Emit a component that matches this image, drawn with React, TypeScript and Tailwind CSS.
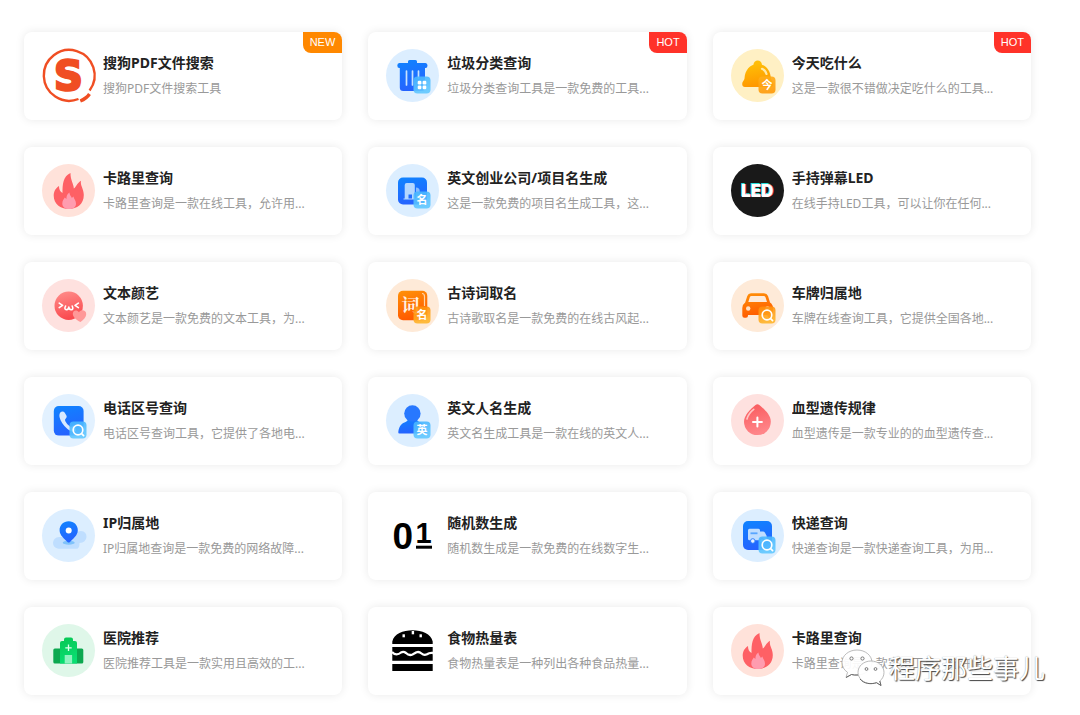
import type { ReactNode } from "react";

const CJK = "font-['Noto_Sans_CJK_SC',sans-serif]";

function Svg({ bg, children }: { bg?: string; children: ReactNode }) {
  return (
    <svg viewBox="0 0 53 53" className="size-[53px] shrink-0 overflow-visible" aria-hidden="true">
      {bg && <circle cx="26.5" cy="26.5" r="26.5" fill={bg} />}
      {children}
    </svg>
  );
}

function Defs() {
  const pairs: [string, string, string][] = [
    ["blue", "#0f84ff", "#2563ff"],
    ["sky", "#45b4ff", "#62c8ff"],
    ["amber", "#ffc107", "#ff9800"],
    ["orange", "#ff9108", "#ff5a00"],
    ["gold", "#ff8a08", "#ffb52b"],
    ["honey", "#ffb01c", "#ff9a08"],
    ["red", "#ff8f8c", "#fa4b50"],
    ["drop", "#f9585b", "#ff8589"],
    ["green", "#08c653", "#08df72"],
  ];
  return (
    <svg className="absolute size-0" aria-hidden="true">
      <defs>
        {pairs.map(([id, from, to]) => (
          <linearGradient key={id} id={id} x1="0" y1="0" x2="0.25" y2="1">
            <stop offset="0" stopColor={from} />
            <stop offset="1" stopColor={to} />
          </linearGradient>
        ))}
      </defs>
    </svg>
  );
}

function Corner({ fill, children }: { fill: string; children?: ReactNode }) {
  return (
    <g>
      <rect x="27.5" y="27.5" width="17" height="17" rx="4" fill={fill} fillOpacity="0.9" />
      {typeof children === "string" ? (
        <text x="36" y="40" textAnchor="middle" fontSize="11" fontWeight="700" fill="#fff" className={CJK}>
          {children}
        </text>
      ) : (
        children
      )}
    </g>
  );
}

const Lens = () => (
  <g fill="none" stroke="#fff" strokeWidth="1.7" strokeLinecap="round">
    <circle cx="36" cy="36" r="4.8" />
    <path d="M39.6 39.6 L41.6 41.6" />
  </g>
);

const SogouIcon = () => (
  <Svg>
    <path d="M47.6 41.5 A25.4 25.4 0 1 0 36.5 50" fill="none" stroke="#f04e23" strokeWidth="2.4" />
    <path d="M38.3 52 Q44.5 49.5 47.5 45" fill="none" stroke="#f04e23" strokeWidth="3.4" />
    <text
      x="26.5" y="41" textAnchor="middle" fontSize="40" fontWeight="700" fill="#f04e23" stroke="#f04e23" strokeWidth="2.4"
      className="font-['DejaVu_Sans',sans-serif]"
    >
      S
    </text>
  </Svg>
);

const TrashIcon = () => (
  <Svg bg="#dceeff">
    <path
      d="M22 14 V12.5 Q22 11 23.5 11 H29.5 Q31 11 31 12.5 V14 H39.5 Q41.5 14 41.5 16.5 T39.5 19 H39 V38.5 Q39 42 35.5 42 H17.2 Q13.8 42 13.8 38.5 V19 H13.3 Q11.3 19 11.3 16.5 T13.3 14 Z"
      fill="url(#blue)"
    />
    <path d="M20.5 22 V36 M26.5 22 V36 M32.5 22 V29" stroke="#c7e2ff" strokeWidth="1.7" strokeLinecap="round" />
    <Corner fill="url(#sky)">
      <g fill="#fff">
        <rect x="31.7" y="31.7" width="3.7" height="3.7" rx="1.2" />
        <rect x="36.6" y="31.7" width="3.7" height="3.7" rx="1.2" />
        <rect x="31.7" y="36.6" width="3.7" height="3.7" rx="1.2" />
        <rect x="36.6" y="36.6" width="3.7" height="3.7" rx="1.2" />
      </g>
    </Corner>
  </Svg>
);

const BellIcon = () => (
  <Svg bg="#fff0c4">
    <circle cx="26.7" cy="15.8" r="4.2" fill="#ffbd08" />
    <path d="M26.7 15 C18.5 15 14 21.5 13.5 29.5 C13.4 31.5 11.2 32.3 11.2 35 Q11.2 38 14 38 H39.5 Q42.3 38 42.3 35 C42.3 32.3 40.1 31.5 40 29.5 C39.5 21.5 35 15 26.7 15 Z" fill="url(#amber)" />
    <path d="M31 19.8 Q34.5 21.3 35.5 25" stroke="#ffe9a8" strokeWidth="2.2" strokeLinecap="round" fill="none" />
    <Corner fill="url(#honey)">今</Corner>
  </Svg>
);

const FlameIcon = () => (
  <Svg bg="#ffe2da">
    <path
      d="M28.5 9 C28.3 16 31.8 20 31.8 24.5 C34 23.5 34.7 19.5 39 16.8 C38 22 41.8 24.5 41.8 31 C41.8 40 35 45 26.7 45 C18.5 45 11.7 40 11.7 31.5 C11.7 27 14 24 17 22 C17 25.5 18 27.5 20.5 29 C20.5 20 21 12.5 28.5 9 Z"
      fill="#fe6065"
    />
    <path d="M27.5 28.5 C27.5 31.5 29.5 32 29.8 34 L31.5 32.6 C31.8 35 34 36.5 34 39.7 C34 43 31 45 27 45 C23 45 20.3 43 20.3 39.5 C20.3 36.5 21.8 35 22.8 33.5 L24.4 35 C24.4 32 25 30 27.5 28.5 Z" fill="#ff9caf" />
  </Svg>
);

const CompanyIcon = () => (
  <Svg bg="#dceeff">
    <rect x="12" y="13.5" width="29" height="27" rx="5" fill="url(#blue)" />
    <path d="M18.7 35 V21 Q18.7 19 20.7 19 H26.8 Q28.8 19 28.8 21 V35 H26 V30.5 H22.5 V35 Z" fill="#b5d7ff" />
    <path d="M30 35 V23.5 Q33.7 23.5 33.7 27 V35 Z" fill="#86bbff" />
    <path d="M17.5 35 H35" stroke="#b5d7ff" />
    <Corner fill="url(#sky)">名</Corner>
  </Svg>
);

const LedIcon = () => (
  <Svg bg="#191919">
    <g fontSize="17" fontWeight="900" textAnchor="middle" className="font-['Inter',sans-serif]">
      <text x="25.6" y="32.2" fill="#29e0dc">LED</text>
      <text x="26.9" y="33" fill="#f0407c">LED</text>
      <text x="26.2" y="32.6" fill="#fff">LED</text>
    </g>
  </Svg>
);

const FaceIcon = () => (
  <Svg bg="#fee1df">
    <circle cx="26.7" cy="26.7" r="14.2" fill="url(#red)" />
    <g fill="none" stroke="#fff" strokeWidth="1.6" strokeLinecap="round" strokeLinejoin="round">
      <path d="M17.2 24.2 L20.6 26.4 L17.2 28.6 M36.4 24.2 L33 26.4 L36.4 28.6" />
      <path d="M23.6 27 Q21.8 30.5 24.5 30.7 Q26.8 30.5 26.8 28 Q26.8 30.5 29.2 30.7 Q31.8 30.5 30.2 27" />
    </g>
    <path d="M38.5 43 C34 41 30.8 37.8 30.8 34.8 C30.8 31 35 30.3 37 33.2 C39 30 44.2 31 44.2 35 C44.2 38.5 41 41.2 38.5 43 Z" fill="#ff9898" />
  </Svg>
);

const PoemIcon = () => (
  <Svg bg="#feead8">
    <rect x="12" y="11.8" width="29.3" height="29.5" rx="5" fill="url(#orange)" />
    <path d="M36 14.5 Q38.5 14.5 38.5 17.5 V27" stroke="#ffd4a8" strokeWidth="1.2" fill="none" />
    <text x="24.5" y="33" textAnchor="middle" fontSize="18" fontWeight="700" fill="#fff1e2" className="font-['Noto_Serif_CJK_SC','Noto_Sans_CJK_SC',serif]">
      词
    </text>
    <Corner fill="url(#gold)">名</Corner>
  </Svg>
);

const CarIcon = () => (
  <Svg bg="#feead8">
    <path
      d="M20 14.3 H33 Q36 14.3 37 17 L39 23.5 Q42 25.5 42 29 V36.5 Q42 38.7 40 38.7 H38.5 Q36.5 38.7 36.5 36.5 V36 H17 V36.5 Q17 38.7 15 38.7 H13.5 Q11.3 38.7 11.3 36.5 V29 Q11.3 25.5 14.2 23.5 L16.3 17 Q17.2 14.3 20 14.3 Z"
      fill="url(#orange)"
    />
    <path d="M20.5 17 H32.7 Q34 17 34.5 18.3 L36 23 H17.3 L18.8 18.3 Q19.2 17 20.5 17 Z" fill="#feead8" />
    <circle cx="17.2" cy="29.5" r="2.2" fill="#ffe0c4" />
    <circle cx="36.5" cy="29.5" r="2.2" fill="#ffe0c4" />
    <Corner fill="url(#gold)"><Lens /></Corner>
  </Svg>
);

const PhoneIcon = () => (
  <Svg bg="#e2f1ff">
    <rect x="11.8" y="12" width="29.8" height="29.6" rx="5" fill="url(#blue)" />
    <path
      d="M19.3 17.8 Q21.3 16.8 22.6 18.5 L24.4 21.5 Q25.4 23.2 23.8 24.6 Q22.6 25.6 23.2 27 Q24.8 30.4 28 32.6 Q29.2 33.2 30.4 32.2 Q31.6 31 33.2 32.2 L34 37 Q30 39 25.5 35 Q19 29.5 17.5 23 Q16.9 19 19.3 17.8 Z"
      fill="#d8e9ff"
    />
    <Corner fill="url(#sky)"><Lens /></Corner>
  </Svg>
);

const PersonIcon = () => (
  <Svg bg="#dceeff">
    <path d="M22.5 24 H30.5 Q31 27.5 34.5 28.5 Q40.5 30.5 40.5 39.5 H13.5 Q12 39.5 12.3 38 C13 32.5 15 29.8 18.5 28.5 Q22 27.2 22.5 24 Z" fill="url(#blue)" />
    <circle cx="26.4" cy="19.5" r="8.2" fill="#2878ff" />
    <Corner fill="url(#sky)">英</Corner>
  </Svg>
);

const DropIcon = () => (
  <Svg bg="#fee1df">
    <path d="M24.5 11 Q26.4 9.5 28.3 11 C33.5 15.5 39.8 21 39.8 27.7 A13.4 13.4 0 0 1 13 27.7 C13 21 19.3 15.5 24.5 11 Z" fill="url(#drop)" />
    <path d="M16 25 Q17.3 19.5 22.7 15.3" stroke="#ffc5c3" strokeWidth="1.7" strokeLinecap="round" fill="none" />
    <path d="M26.4 23.5 V32.5 M22 28 H30.9" stroke="#fff" strokeWidth="2" strokeLinecap="round" />
  </Svg>
);

const PinIcon = () => (
  <Svg bg="#dceeff">
    <path d="M17 28 H32 Q32.5 22 39 22 Q44.5 22.5 44.5 28 Q44 33.5 37.5 34 Q37.5 39.8 34.5 39.8 H16.5 Q11 39 11 33.8 Q11.5 28.5 17 28 Z" fill="#bfdeff" />
    <ellipse cx="26.7" cy="33.7" rx="6" ry="2" fill="#7fc2fa" />
    <path d="M26.7 12.3 C32 12.3 35.8 16.2 35.8 21.2 C35.8 26.5 31 29.5 28 33 Q26.7 34 25.4 33 C22.4 29.5 17.6 26.5 17.6 21.2 C17.6 16.2 21.4 12.3 26.7 12.3 Z" fill="url(#blue)" />
    <circle cx="26.7" cy="21.5" r="3" fill="#fff" />
  </Svg>
);

const RandomIcon = () => (
  <Svg>
    <g fill="#000" fontWeight="700" textAnchor="middle" className="font-['Liberation_Sans',sans-serif]">
      <text x="16.8" y="39.5" fontSize="37">0</text>
      <text x="37.5" y="33.5" fontSize="29">1</text>
    </g>
    <path d="M30 38.2 H46" stroke="#000" strokeWidth="3" />
  </Svg>
);

const TruckIcon = () => (
  <Svg bg="#dceeff">
    <rect x="12" y="12" width="29" height="29" rx="5" fill="url(#blue)" />
    <path d="M18.5 19.7 H27.5 Q29 19.7 29 21.2 V22.5 H32 Q33.3 22.5 34 23.7 L35.7 27 V31.3 H18.5 Q17 31.3 17 29.8 V21.2 Q17 19.7 18.5 19.7 Z" fill="#bfddff" />
    <path d="M19.5 24.3 H26.5" stroke="#58a5ff" strokeWidth="1.8" />
    <circle cx="21.8" cy="32" r="2.3" fill="#e6f2ff" stroke="#2f7eff" />
    <circle cx="31" cy="32" r="2.3" fill="#e6f2ff" stroke="#2f7eff" />
    <Corner fill="url(#sky)"><Lens /></Corner>
  </Svg>
);

const HospitalIcon = () => (
  <Svg bg="#dff7e9">
    <rect x="11.3" y="24.5" width="30" height="15" rx="1.5" fill="#0ca850" />
    <path d="M18 39.5 V19 Q18 17 20 17 H22 V15.5 Q22 13.5 24 13.5 H29 Q31 13.5 31 15.5 V17 H33 Q35 17 35 19 V39.5 Z" fill="url(#green)" />
    <path d="M26.5 20.6 V27 M23.3 23.8 H29.7" stroke="#ddffec" strokeWidth="1.3" />
    <rect x="22.7" y="31" width="7.4" height="8.5" fill="#8ff3c0" />
  </Svg>
);

const BurgerIcon = () => (
  <Svg>
    <path d="M6.3 20 V17.5 C8 10 17 6.3 26.5 6.3 C36 6.3 45 10 46.7 17.5 V20 Z M6.3 23 H46.7 V36.7 H6.3 Z M6.3 40 H46.7 V47 H6.3 Z" fill="#000" />
    <g fill="#fff">
      <rect x="16.5" y="10.3" width="2.4" height="3" />
      <rect x="25.7" y="7" width="2.4" height="3.3" />
      <rect x="33.5" y="10.3" width="2.4" height="3" />
    </g>
    <path d="M6 28 Q8 30.3 10.5 30.3 Q13 30.3 15 28.5 Q17.5 27 20 29 Q23 32 26.5 30.5 Q28 29.8 30.5 28.3 Q33 27.3 35.5 29.5 Q38 31.8 41 30.3 Q43.5 28.5 47 29" fill="none" stroke="#fff" strokeWidth="2.3" />
  </Svg>
);

type Tool = { icon: () => ReactNode; title: string; desc: string; tag?: "NEW" | "HOT" };

const tools: Tool[] = [
  { icon: SogouIcon, title: "搜狗PDF文件搜索", desc: "搜狗PDF文件搜索工具", tag: "NEW" },
  { icon: TrashIcon, title: "垃圾分类查询", desc: "垃圾分类查询工具是一款免费的工具...", tag: "HOT" },
  { icon: BellIcon, title: "今天吃什么", desc: "这是一款很不错做决定吃什么的工具...", tag: "HOT" },
  { icon: FlameIcon, title: "卡路里查询", desc: "卡路里查询是一款在线工具，允许用..." },
  { icon: CompanyIcon, title: "英文创业公司/项目名生成", desc: "这是一款免费的项目名生成工具，这..." },
  { icon: LedIcon, title: "手持弹幕LED", desc: "在线手持LED工具，可以让你在任何..." },
  { icon: FaceIcon, title: "文本颜艺", desc: "文本颜艺是一款免费的文本工具，为..." },
  { icon: PoemIcon, title: "古诗词取名", desc: "古诗歌取名是一款免费的在线古风起..." },
  { icon: CarIcon, title: "车牌归属地", desc: "车牌在线查询工具，它提供全国各地..." },
  { icon: PhoneIcon, title: "电话区号查询", desc: "电话区号查询工具，它提供了各地电..." },
  { icon: PersonIcon, title: "英文人名生成", desc: "英文名生成工具是一款在线的英文人..." },
  { icon: DropIcon, title: "血型遗传规律", desc: "血型遗传是一款专业的的血型遗传查..." },
  { icon: PinIcon, title: "IP归属地", desc: "IP归属地查询是一款免费的网络故障..." },
  { icon: RandomIcon, title: "随机数生成", desc: "随机数生成是一款免费的在线数字生..." },
  { icon: TruckIcon, title: "快递查询", desc: "快递查询是一款快递查询工具，为用..." },
  { icon: HospitalIcon, title: "医院推荐", desc: "医院推荐工具是一款实用且高效的工..." },
  { icon: BurgerIcon, title: "食物热量表", desc: "食物热量表是一种列出各种食品热量..." },
  { icon: FlameIcon, title: "卡路里查询", desc: "卡路里查询是一款实用工具，允许用..." },
];

function Card({ icon: Icon, title, desc, tag }: Tool) {
  return (
    <li>
      <a
        href="#"
        className="relative flex items-center gap-2 rounded-lg bg-white px-[18px] pt-[17px] pb-[18px] shadow-[0_0_10px_rgba(0,0,0,0.09)]"
      >
        <Icon />
        <div className="flex min-w-0 flex-col gap-1.5">
          <h2 className="truncate text-sm leading-5 font-bold text-[#222]">{title}</h2>
          <p className="truncate text-xs leading-5 text-[#999]">{desc}</p>
        </div>
        {tag && (
          <span
            className={`absolute top-0 right-0 rounded-tr-lg rounded-bl-lg px-[7px] font-['Liberation_Sans',sans-serif] text-[11px] leading-[21px] text-white ${
              tag === "NEW" ? "bg-[#ff8800]" : "bg-[#ff3229]"
            }`}
          >
            {tag}
          </span>
        )}
      </a>
    </li>
  );
}

function Watermark() {
  return (
    <div className="pointer-events-none absolute right-[35px] bottom-7 flex items-center gap-1">
      <svg viewBox="0 0 44 38" className="h-[38px] w-11" aria-hidden="true">
        <g fill="#fff" fillOpacity="0.92" stroke="#aaa" strokeWidth="0.8">
          <path d="M16 1 C7.5 1 1 6.7 1 13.5 C1 17.5 3 21 6.5 23.3 L5 28.5 L10.5 25.5 Q13 26.3 17 26 C24 25.5 31 21 31 13.5 C31 6.7 24.5 1 16 1 Z" />
          <path d="M30 12 C22.8 12 17 17 17 23.3 C17 29.5 22.8 34.6 30 34.6 Q33 34.6 35.5 33.7 L40 36.5 L38.8 32 C41.5 30 43 26.8 43 23.3 C43 17 37.2 12 30 12 Z" />
        </g>
        <path d="M5 28.5 L10.5 25.5 Q13 26.3 17 26 M19 30 C23 35 30 35.5 35.5 33.7 L40 36.5 L38.8 32" fill="none" stroke="#666" />
        <g fill="#fff" stroke="#777" strokeWidth="1">
          <circle cx="10.5" cy="9.5" r="1.6" />
          <circle cx="21.5" cy="9.5" r="1.6" />
          <circle cx="25.5" cy="20" r="1.4" />
          <circle cx="34.5" cy="20" r="1.4" />
        </g>
      </svg>
      <span className="text-[26px] leading-9 text-white [text-shadow:1px_1px_1px_#444,0_0_1px_#999]">程序那些事儿</span>
    </div>
  );
}

export default function App() {
  return (
    <main className="relative bg-white pt-8 pr-[49px] pb-5 pl-6 font-['Noto_Sans','Noto_Sans_CJK_SC',sans-serif]">
      <Defs />
      <ul className="grid grid-cols-3 gap-x-[26px] gap-y-[27px]">
        {tools.map((tool, i) => (
          <Card key={i} {...tool} />
        ))}
      </ul>
      <Watermark />
    </main>
  );
}
